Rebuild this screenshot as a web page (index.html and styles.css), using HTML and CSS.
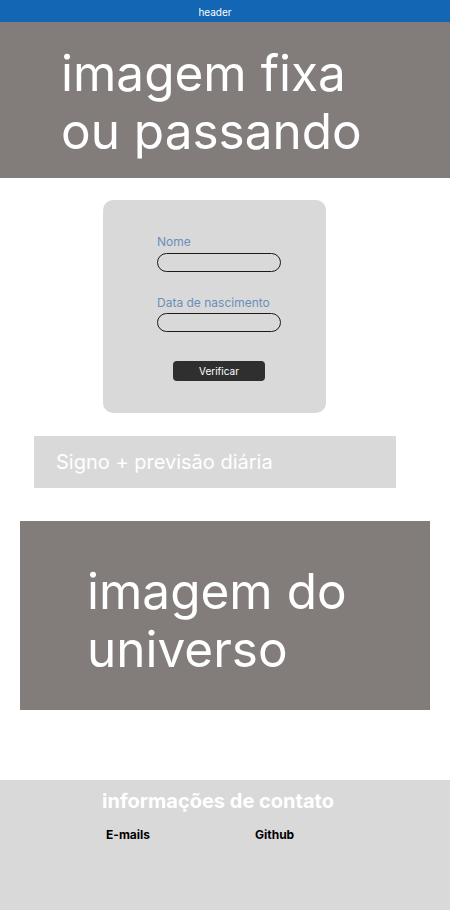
FILE: index.html
```html
<!DOCTYPE html>
<html lang="pt">
<head>
<meta charset="utf-8">
<link rel="stylesheet" href="styles.css">
</head>
<body>
<header class="topbar">header</header>
<section class="hero">
  <p class="hero-text">imagem fixa<br>ou passando</p>
</section>
<main class="content">
  <form class="card">
    <label class="field-label">Nome</label>
    <div class="input"></div>
    <label class="field-label field-label-2">Data de nascimento</label>
    <div class="input"></div>
    <button type="button" class="btn">Verificar</button>
  </form>
  <div class="signo">Signo + previsão diária</div>
  <section class="universe">
    <p class="universe-text">imagem do<br>universo</p>
  </section>
</main>
<footer class="footer">
  <h2 class="footer-title">informações de contato</h2>
  <div class="footer-cols">
    <span class="col-email">E-mails</span>
    <span class="col-git">Github</span>
  </div>
</footer>
</body>
</html>
```
FILE: styles.css
```css
* { box-sizing: border-box; }
body {
  margin: 0;
  font-family: Inter, "Noto Sans", sans-serif;
  background: #fff;
  width: 450px;
  height: 910px;
  overflow: hidden;
}
.topbar {
  height: 22px;
  background: #1366b3;
  color: #fff;
  font-size: 10px;
  line-height: 24px;
  text-align: center;
  padding-right: 20px;
}
.hero {
  height: 156px;
  background: #827c7b;
  padding: 22px 0 0 61px;
}
.hero-text {
  margin: 0;
  color: #fff;
  font-size: 49.5px;
  line-height: 58px;
  font-weight: 400;
}
.content {
  display: flex;
  flex-direction: column;
}
.card {
  margin: 22px 0 0 103px;
  width: 223px;
  height: 213px;
  background: #d9d9d9;
  border-radius: 10px;
  padding: 34px 0 0 54px;
  display: flex;
  flex-direction: column;
}
.field-label {
  color: #6a8fbb;
  font-size: 12px;
  line-height: 16px;
  height: 19px;
}
.field-label-2 { margin-top: 23px; height: 18px; }
.input {
  width: 124px;
  height: 19px;
  border: 1.3px solid #1a1a1a;
  border-radius: 10px;
}
.btn {
  margin: 29px 0 0 16px;
  width: 92px;
  height: 20px;
  background: #2f2f2f;
  color: #fff;
  border: none;
  border-radius: 4px;
  font-family: Inter, "Noto Sans", sans-serif;
  font-size: 10px;
  padding: 0;
}
.signo {
  margin: 23px 0 0 34px;
  width: 362px;
  height: 52px;
  background: #d9d9d9;
  color: #fff;
  font-size: 20px;
  line-height: 52px;
  padding-left: 22px;
}
.universe {
  margin: 33px 0 0 20px;
  width: 410px;
  height: 189px;
  background: #827c7b;
  padding: 41px 0 0 67px;
}
.universe-text {
  margin: 0;
  color: #fff;
  font-size: 49.5px;
  line-height: 58px;
}
.footer {
  margin-top: 70px;
  height: 130px;
  background: #d9d9d9;
  padding-top: 9px;
}
.footer-title {
  margin: 0;
  color: #fff;
  font-size: 20px;
  font-weight: 700;
  line-height: 24px;
  text-align: center;
  padding-right: 14px;
}
.footer-cols {
  display: flex;
  margin-top: 14px;
  padding-left: 106px;
  font-size: 12px;
  font-weight: 700;
  color: #000;
}
.col-email { width: 149px; }
```
